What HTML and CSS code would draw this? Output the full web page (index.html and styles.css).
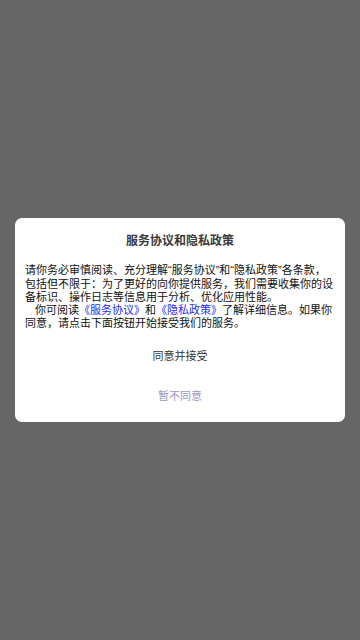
FILE: index.html
```html
<!DOCTYPE html>
<html lang="zh-CN">
<head>
<meta charset="utf-8">
<meta name="viewport" content="width=360, initial-scale=1">
<link rel="stylesheet" href="styles.css">
<title>服务协议和隐私政策</title>
</head>
<body>
<div class="overlay">
  <div class="dialog">
    <div class="title">服务协议和隐私政策</div>
    <div class="content">
      <p class="para">请你务必审慎阅读、充分理解“服务协议”和“隐私政策”各条款，包括但不限于：为了更好的向你提供服务，我们需要收集你的设备标识、操作日志等信息用于分析、优化应用性能。</p>
      <p class="para indent">你可阅读<a class="link">《服务协议》</a>和<a class="link">《隐私政策》</a>了解详细信息。如果你同意，请点击下面按钮开始接受我们的服务。</p>
    </div>
    <div class="actions">
      <div class="btn btn-accept">同意并接受</div>
      <div class="btn btn-decline">暂不同意</div>
    </div>
  </div>
</div>
</body>
</html>
```
FILE: styles.css
```css
html, body {
  margin: 0;
  padding: 0;
  height: 100%;
}
body {
  background: #666666;
  font-family: "Liberation Sans", "Noto Sans CJK SC", sans-serif;
}
.overlay {
  height: 100%;
  display: flex;
  align-items: center;
  justify-content: center;
  padding: 0 15px;
  box-sizing: border-box;
}
.dialog {
  width: 100%;
  background: #ffffff;
  border-radius: 7px;
  padding: 15px 0 7px;
  box-sizing: border-box;
}
.title {
  text-align: center;
  font-size: 12px;
  line-height: 16px;
  font-weight: bold;
  color: #3a3a3a;
}
.content {
  padding: 15px 10px 0;
}
.para {
  margin: 0;
  font-size: 11px;
  line-height: 13.25px;
  color: #111111;
}
.indent {
  text-indent: 10px;
}
.link {
  color: #2a2af0;
}
.actions {
  display: flex;
  flex-direction: column;
  margin-top: 4px;
}
.btn {
  height: 40px;
  display: flex;
  align-items: center;
  justify-content: center;
  font-size: 11px;
}
.btn-accept {
  color: #333333;
}
.btn-decline {
  color: #9c98c0;
}
```
